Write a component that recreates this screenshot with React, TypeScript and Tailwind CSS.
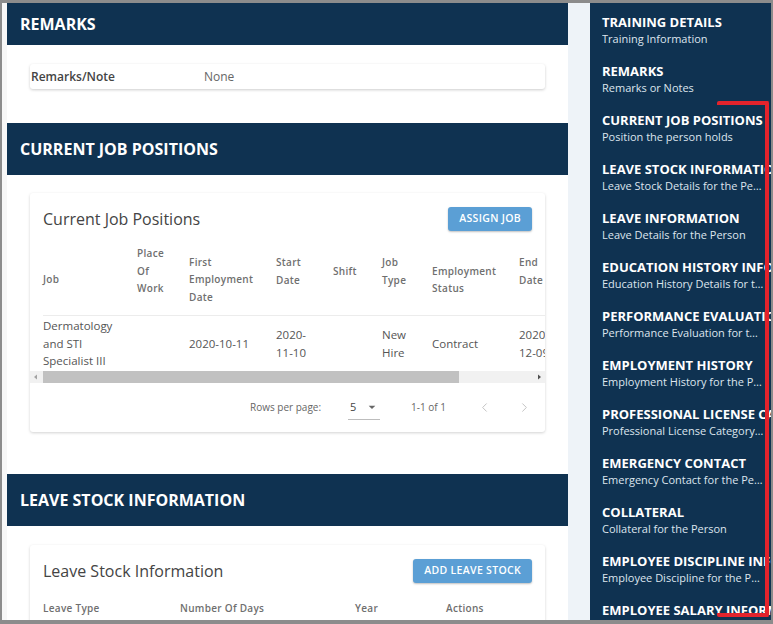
import React from 'react';
import { ChevronLeft, ChevronRight } from 'lucide-react';

const NAV_ITEMS = [
  { title: 'TRAINING DETAILS', sub: 'Training Information' },
  { title: 'REMARKS', sub: 'Remarks or Notes' },
  { title: 'CURRENT JOB POSITIONS', sub: 'Position the person holds' },
  { title: 'LEAVE STOCK INFORMATION', sub: 'Leave Stock Details for the Person' },
  { title: 'LEAVE INFORMATION', sub: 'Leave Details for the Person' },
  { title: 'EDUCATION HISTORY INFORMATION', sub: 'Education History Details for the Person' },
  { title: 'PERFORMANCE EVALUATION', sub: 'Performance Evaluation for the Person' },
  { title: 'EMPLOYMENT HISTORY', sub: 'Employment History for the Person' },
  { title: 'PROFESSIONAL LICENSE CATEGORY', sub: 'Professional License Category for the Person' },
  { title: 'EMERGENCY CONTACT', sub: 'Emergency Contact for the Person' },
  { title: 'COLLATERAL', sub: 'Collateral for the Person' },
  { title: 'EMPLOYEE DISCIPLINE INFORMATION', sub: 'Employee Discipline for the Person' },
  { title: 'EMPLOYEE SALARY INFORMATION', sub: 'Employee Salary for the Person' },
];

const SectionHeader: React.FC<{ title: string; tall?: boolean }> = ({ title, tall = true }) => (
  <div
    className={`${tall ? 'h-[52px]' : 'h-[42px]'} bg-[#0f3251] flex items-center px-[13px] text-[16px] font-bold text-white`}
  >
    {title}
  </div>
);

const ActionButton: React.FC<{ label: string }> = ({ label }) => (
  <button className="h-[24px] px-[11px] rounded-[3px] bg-[#5b9fd5] text-white text-[10.5px] font-semibold tracking-[0.03em] shadow-[0_1px_2px_rgba(0,0,0,0.25)]">
    {label}
  </button>
);

// lifted: header text sits 8.5px above the row's middle, as in the source table
const HeadCell: React.FC<{ w: string; lifted?: boolean; children: React.ReactNode }> = ({ w, lifted, children }) => (
  <div
    className={`${w} ${lifted ? 'pb-[17px]' : ''} shrink-0 flex items-center text-[10px] leading-[17.5px] font-semibold tracking-[0.03em] text-[#6f6f6f]`}
  >
    <div>{children}</div>
  </div>
);

const BodyCell: React.FC<{ w: string; children?: React.ReactNode }> = ({ w, children }) => (
  <div className={`${w} shrink-0 flex items-center text-[11.5px] leading-[17.5px] text-[#555]`}>
    <div>{children}</div>
  </div>
);

const JobCard = () => (
  <div className="bg-white rounded-[3px] shadow-[0_1px_3px_rgba(0,0,0,0.18)] pt-[12px]">
    <div className="h-[28px] flex items-center justify-between px-[13px]">
      <span className="text-[16px] text-[#444]">Current Job Positions</span>
      <ActionButton label="ASSIGN JOB" />
    </div>
    <div className="mt-[12px] overflow-hidden pl-[13px]">
      <div className="flex h-[71px] border-b border-[#ececec] w-[560px]">
        <HeadCell w="w-[94px]">Job</HeadCell>
        <HeadCell w="w-[52px]" lifted>Place<br />Of<br />Work</HeadCell>
        <HeadCell w="w-[87px]">First<br />Employment<br />Date</HeadCell>
        <HeadCell w="w-[57px]" lifted>Start<br />Date</HeadCell>
        <HeadCell w="w-[49px]" lifted>Shift</HeadCell>
        <HeadCell w="w-[50px]" lifted>Job<br />Type</HeadCell>
        <HeadCell w="w-[87px]">Employment<br />Status</HeadCell>
        <HeadCell w="w-[60px]" lifted>End<br />Date</HeadCell>
      </div>
      <div className="flex h-[55px] w-[560px]">
        <BodyCell w="w-[94px]">Dermatology<br />and STI<br />Specialist III</BodyCell>
        <BodyCell w="w-[52px]" />
        <BodyCell w="w-[87px]">2020-10-11</BodyCell>
        <BodyCell w="w-[57px]">2020-<br />11-10</BodyCell>
        <BodyCell w="w-[49px]" />
        <BodyCell w="w-[50px]">New<br />Hire</BodyCell>
        <BodyCell w="w-[87px]">Contract</BodyCell>
        <BodyCell w="w-[60px]">2020-<br />12-09</BodyCell>
      </div>
    </div>
    {/* horizontal scrollbar */}
    <div className="h-[12px] bg-[#f1f1f1] flex items-center">
      <svg width="13" height="12" viewBox="0 0 13 12" className="shrink-0">
        <path d="M4 6 L7 3.5 L7 8.5 Z" fill="#a3a3a3" />
      </svg>
      <div className="h-[12px] w-[416px] bg-[#c1c1c1]" />
      <div className="flex-1" />
      <svg width="13" height="12" viewBox="0 0 13 12" className="shrink-0">
        <path d="M9 6 L6 3.5 L6 8.5 Z" fill="#505050" />
      </svg>
    </div>
    {/* footer */}
    <div className="h-[49px] flex items-center text-[10px] text-[#666]">
      <span className="ml-[220px]">Rows per page:</span>
      <div className="ml-[27px] w-[32px] h-[24px] border-b border-[#bdbdbd] flex items-center justify-between pl-[2px] text-[11px] text-[#444]">
        <span>5</span>
        <svg width="16" height="16" viewBox="0 0 24 24">
          <path d="M7 10l5 5 5-5z" fill="#666" />
        </svg>
      </div>
      <span className="ml-[31px]">1-1 of 1</span>
      <ChevronLeft size={15} strokeWidth={1.6} className="ml-[31px] text-[#c4c4c4]" />
      <ChevronRight size={15} strokeWidth={1.6} className="ml-[25px] text-[#c4c4c4]" />
    </div>
  </div>
);

const LeaveCard = () => (
  <div className="bg-white rounded-[3px] shadow-[0_1px_3px_rgba(0,0,0,0.18)] pt-[12px]">
    <div className="h-[28px] flex items-center justify-between px-[13px]">
      <span className="text-[16px] text-[#444]">Leave Stock Information</span>
      <ActionButton label="ADD LEAVE STOCK" />
    </div>
    <div className="mt-[12px] pl-[13px] flex h-[22px] items-center text-[10px] font-semibold tracking-[0.03em] text-[#6f6f6f]">
      <div className="w-[137px]">Leave Type</div>
      <div className="w-[175px]">Number Of Days</div>
      <div className="w-[91px]">Year</div>
      <div>Actions</div>
    </div>
    <div className="h-[30px]" />
  </div>
);

export default function App() {
  return (
    <div
      className="w-[773px] h-[624px] overflow-hidden bg-[#8c8c8c] pt-[3px] pl-[2px] pr-[2px] pb-[4px]"
      style={{ fontFamily: '"Open Sans", "Noto Sans", sans-serif' }}
    >
      <div className="relative h-full flex bg-[#f4f7fa] overflow-hidden">
        <div className="w-[5px] shrink-0 bg-[#f7f7f7]" />
        {/* main column */}
        <div className="w-[561px] shrink-0 bg-white overflow-hidden">
          <SectionHeader title="REMARKS" tall={false} />
          <div className="px-[23px] pt-[19px] pb-[34px]">
            <div className="h-[25px] flex items-center bg-white rounded-[3px] shadow-[0_1px_3px_rgba(0,0,0,0.2)] pl-[1px] text-[12px]">
              <span className="w-[173px] font-semibold text-[#444]">Remarks/Note</span>
              <span className="text-[#666]">None</span>
            </div>
          </div>
          <SectionHeader title="CURRENT JOB POSITIONS" />
          <div className="px-[23px] pt-[18px] pb-[42px]">
            <JobCard />
          </div>
          <SectionHeader title="LEAVE STOCK INFORMATION" />
          <div className="px-[23px] pt-[19px]">
            <LeaveCard />
          </div>
        </div>
        <div className="w-[22px] shrink-0 bg-[#eef3f8]" />
        {/* side navigation */}
        <div className="w-[181px] shrink-0 bg-[#0f3251] overflow-hidden pl-[12px] pt-[11px] flex flex-col gap-[17px]">
          {NAV_ITEMS.map((item) => (
            <div key={item.title} className="h-[32px]">
              <div className="text-[13px] leading-[17px] font-bold text-white whitespace-nowrap">{item.title}</div>
              <div className="w-[162px] text-[11px] leading-[15px] text-[#dde5ee] truncate">{item.sub}</div>
            </div>
          ))}
        </div>
        {/* red annotation bracket */}
        <div className="absolute left-[715px] top-[98px] w-[52px] h-[516px] border-t-[4px] border-r-[4px] border-b-[4px] border-[#e3232c] rounded-[2px]" />
      </div>
    </div>
  );
}
